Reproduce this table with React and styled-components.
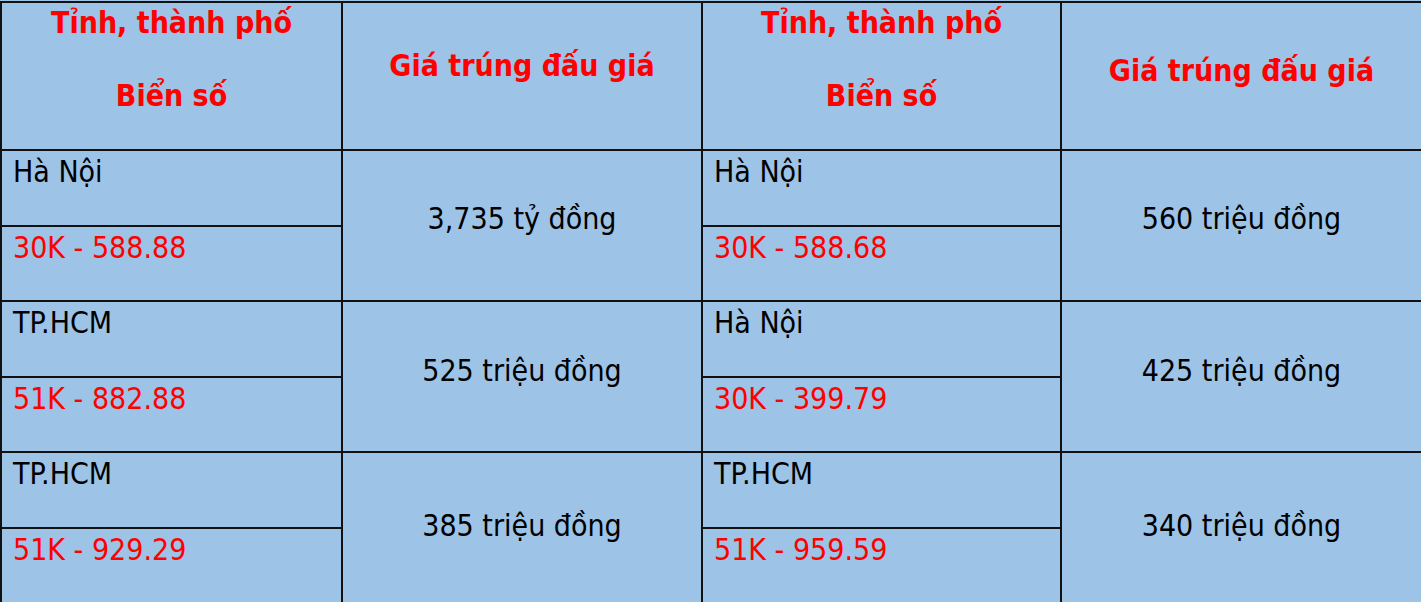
import React from 'react';
import styled, { createGlobalStyle } from 'styled-components';

const GlobalStyle = createGlobalStyle`
    html, body {
        margin: 0;
        padding: 0;
        background: #9dc3e6;
    }
    body {
        font-family: "DejaVu Sans Condensed", "DejaVu Sans", sans-serif;
    }
`;

const Table = styled.table`
    width: 1421px;
    border-collapse: collapse;
    table-layout: fixed;
    background: #9dc3e6;
    margin-top: 1px;
`;

// header cells are 150px tall; lift moves the text up from the middle
const HeadCell = styled.th`
    height: ${(p) => 146 - (p.$lift || 0)}px;
    padding: 0 0 ${(p) => p.$lift || 0}px;
    border: 2px solid #111;
    color: #ff0000;
    font-size: 30px;
    font-weight: bold;
    text-align: center;
    vertical-align: middle;
`;

const HeadLine = styled.div`
    height: 73px;
    line-height: 40px;
`;

const NameCell = styled.td`
    height: 70.5px;
    padding: 3px 11px 0;
    border: 2px solid #111;
    color: ${(p) => (p.$plate ? '#ff0000' : '#000')};
    font-size: 30px;
    line-height: 36px;
    vertical-align: top;
    white-space: nowrap;
`;

const PriceCell = styled.td`
    padding: 0 0 ${(p) => p.$lift}px;
    border: 2px solid #111;
    color: #000;
    font-size: 30px;
    text-align: center;
    vertical-align: middle;
`;

const rows = [
    {
        left: { city: 'Hà Nội', plate: '30K - 588.88', price: '3,735 tỷ đồng' },
        right: { city: 'Hà Nội', plate: '30K - 588.68', price: '560 triệu đồng' },
        lift: 14,
    },
    {
        left: { city: 'TP.HCM', plate: '51K - 882.88', price: '525 triệu đồng' },
        right: { city: 'Hà Nội', plate: '30K - 399.79', price: '425 triệu đồng' },
        lift: 13,
    },
    {
        left: { city: 'TP.HCM', plate: '51K - 929.29', price: '385 triệu đồng' },
        right: { city: 'TP.HCM', plate: '51K - 959.59', price: '340 triệu đồng' },
        lift: 4,
    },
];

const Header = ({ lift }) => (
    <>
        <HeadCell>
            <HeadLine>Tỉnh, thành phố</HeadLine>
            <HeadLine>Biển số</HeadLine>
        </HeadCell>
        <HeadCell $lift={lift}>Giá trúng đấu giá</HeadCell>
    </>
);

export default function App() {
    return (
        <>
            <GlobalStyle />
            <Table>
                <colgroup>
                    <col style={{ width: 341 }} />
                    <col style={{ width: 360 }} />
                    <col style={{ width: 359 }} />
                    <col style={{ width: 361 }} />
                </colgroup>
                <thead>
                    <tr>
                        <Header lift={21} />
                        <Header lift={11} />
                    </tr>
                </thead>
                <tbody>
                    {rows.map((r, i) => (
                        <React.Fragment key={i}>
                            <tr>
                                <NameCell>{r.left.city}</NameCell>
                                <PriceCell rowSpan={2} $lift={r.lift}>
                                    {r.left.price}
                                </PriceCell>
                                <NameCell>{r.right.city}</NameCell>
                                <PriceCell rowSpan={2} $lift={r.lift}>
                                    {r.right.price}
                                </PriceCell>
                            </tr>
                            <tr>
                                <NameCell $plate>{r.left.plate}</NameCell>
                                <NameCell $plate>{r.right.plate}</NameCell>
                            </tr>
                        </React.Fragment>
                    ))}
                </tbody>
            </Table>
        </>
    );
}
